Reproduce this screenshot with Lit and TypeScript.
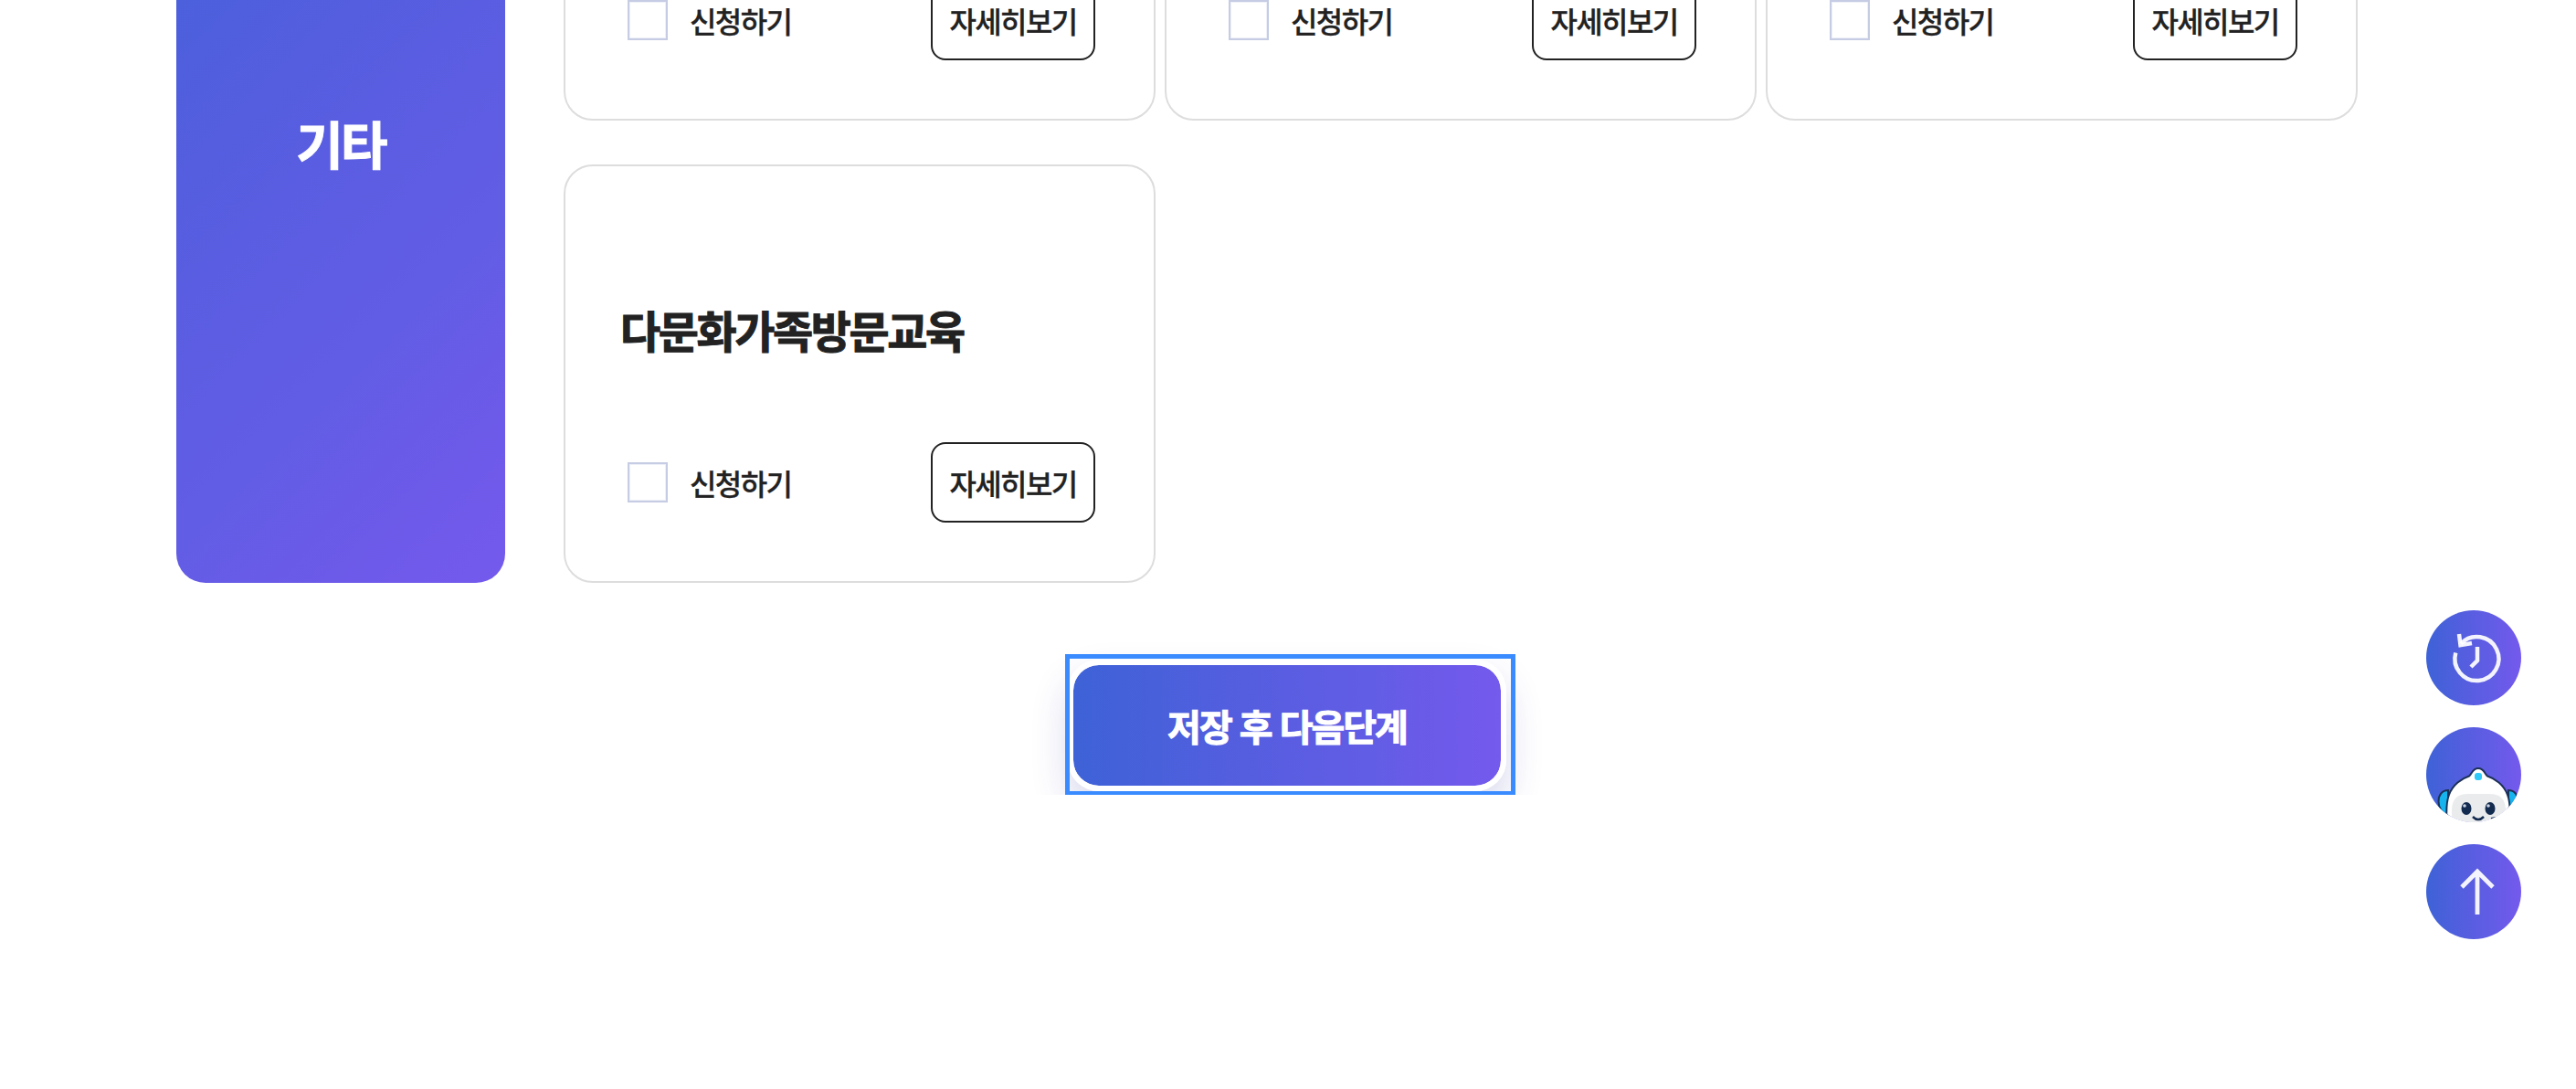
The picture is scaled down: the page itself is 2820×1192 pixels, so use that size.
import { LitElement, html, css, svg } from 'lit';
import { customElement, property } from 'lit/decorators.js';

const fontStack = css`"Noto Sans CJK KR", "Noto Sans", sans-serif`;
const brandStops = css`#3e62d7, #5a5de1 50%, #625de5 70%, #6c5ae9 85%, #745aed`;

@customElement('course-card')
class CourseCard extends LitElement {
  static styles = css`
    :host {
      display: flex;
      flex-direction: column;
      box-sizing: border-box;
      height: 458px;
      padding: 132px 64px 64px 60px;
      border: 2px solid #ddd;
      border-radius: 32px;
      background: #fff;
      color: #222;
    }
    h3 {
      flex: 1;
      margin: 0;
      font-size: 48px;
      font-weight: 700;
      line-height: 92px;
      letter-spacing: -0.05em;
      white-space: nowrap;
      -webkit-text-stroke: 1px currentColor;
    }
    .row {
      display: flex;
      align-items: center;
      justify-content: space-between;
      height: 88px;
    }
    label {
      display: flex;
      align-items: center;
      gap: 24px;
      padding-left: 8px;
      font-size: 32px;
      font-weight: 500;
      line-height: 48px;
      letter-spacing: -0.05em;
    }
    .box {
      box-sizing: border-box;
      width: 44px;
      height: 44px;
      border: 2px solid #c5cce3;
      box-shadow: inset 0 0 0 1px #eef0f8;
    }
    button {
      box-sizing: border-box;
      width: 180px;
      height: 88px;
      padding: 0;
      border: 2px solid #222;
      border-radius: 16px;
      background: #fff;
      color: #222;
      font: inherit;
      font-size: 32px;
      font-weight: 500;
      letter-spacing: -0.05em;
    }
    label,
    button {
      -webkit-text-stroke: 0.3px currentColor;
    }
  `;

  @property() name = '';

  render() {
    return html`
      <h3>${this.name}</h3>
      <div class="row">
        <label><span class="box"></span><span>신청하기</span></label>
        <button>자세히보기</button>
      </div>
    `;
  }
}

const historyIcon = svg`
  <g fill="none" stroke="#fff" stroke-opacity=".93" stroke-width="4.500">
    <path d="M32.300 46.500A24 24 0 1 0 38 36.500" />
    <path d="M36 26L37.500 38.200L50 36" />
    <path d="M56 40V55L49 62" />
  </g>
`;

const robotIcon = svg`
  <g stroke="#1c3157" stroke-width="2">
    <path fill="#16b4ee" d="M24 69C10 69 10 92 24 97Z" />
    <path fill="#16b4ee" d="M90 69C104 69 104 92 90 97Z" />
    <path fill="#fff" d="M23 110C22 98 21 84 25 74C29 63 39 56 47 53.500C50 52 50 45 57 45C64 45 64 52 67 53.500C75 56 85 63 89 74C93 84 92 98 91 110Z" />
  </g>
  <path fill="#e9ebec" d="M29 104C26 84 29 73 46 73H69C86 73 89 84 86 104Z" />
  <rect x="53" y="50" width="8" height="8" rx="3" fill="#2cc9fa" />
  <ellipse cx="44" cy="89" rx="5.500" ry="7" fill="#142b50" />
  <ellipse cx="70" cy="89" rx="5.500" ry="7" fill="#142b50" />
  <circle cx="42" cy="86" r="1.800" fill="#cbd5e4" />
  <circle cx="68" cy="86" r="1.800" fill="#cbd5e4" />
  <path d="M51 98Q57 104 63 98" fill="none" stroke="#142b50" stroke-width="2.500" />
  <path d="M71 100L76 99" stroke="#142b50" stroke-width="2" />
`;

const arrowIcon = svg`
  <path d="M56 77V30M39 47L56 30L73 47" fill="none" stroke="#fff" stroke-opacity=".93" stroke-width="4.800" />
`;

@customElement('quick-menu')
class QuickMenu extends LitElement {
  static styles = css`
    :host {
      display: flex;
      flex-direction: column;
      gap: 24px;
    }
    button {
      width: 104px;
      height: 104px;
      padding: 0;
      border: 0;
      border-radius: 50%;
      overflow: hidden;
      background: linear-gradient(90deg, ${brandStops});
    }
    svg {
      display: block;
    }
  `;

  render() {
    return [historyIcon, robotIcon, arrowIcon].map(
      (icon) => html`<button><svg width="104" height="104" viewBox="0 0 104 104">${icon}</svg></button>`
    );
  }
}

@customElement('app-root')
class AppRoot extends LitElement {
  static styles = css`
    :host {
      display: block;
      position: relative;
      height: 1192px;
      overflow: hidden;
      background: #fff;
      font-family: ${fontStack};
    }
    .section {
      display: flex;
      gap: 64px;
      width: 2388px;
      height: 964px;
      margin: -326px 0 0 193px;
    }
    .category {
      display: flex;
      align-items: center;
      justify-content: center;
      box-sizing: border-box;
      width: 360px;
      padding-bottom: 2px;
      border-radius: 32px;
      background: linear-gradient(135deg, ${brandStops});
      color: #fff;
      font-size: 56px;
      font-weight: 700;
      letter-spacing: -0.05em;
      -webkit-text-stroke: 1px currentColor;
    }
    .cards {
      display: grid;
      grid-template-columns: repeat(3, 648px);
      grid-template-rows: 458px 458px;
      gap: 48px 10px;
    }
    .actions {
      display: flex;
      justify-content: center;
      height: 232px;
      padding-top: 84px;
      box-sizing: border-box;
      overflow: hidden;
    }
    .next {
      position: relative;
      box-sizing: border-box;
      width: 480px;
      height: 144px;
      margin-right: 2px;
      padding: 0;
      border: 6px solid #fff;
      border-radius: 34px;
      background: linear-gradient(90deg, ${brandStops}) padding-box;
      box-shadow: 0 20px 40px rgba(60, 60, 170, 0.2);
      color: #fff;
      font: inherit;
      font-size: 40px;
      font-weight: 700;
      letter-spacing: -0.05em;
      word-spacing: 2px;
      -webkit-text-stroke: 1px currentColor;
    }
    .focus {
      position: absolute;
      top: -12px;
      left: -9px;
      box-sizing: border-box;
      width: 493px;
      height: 155px;
      border: 5px solid #3a8bff;
    }
    quick-menu {
      position: absolute;
      top: 668px;
      right: 60px;
    }
  `;

  render() {
    return html`
      <section class="section">
        <div class="category">기타</div>
        <div class="cards">
          <course-card></course-card>
          <course-card></course-card>
          <course-card></course-card>
          <course-card name="다문화가족방문교육"></course-card>
        </div>
      </section>
      <div class="actions">
        <button class="next">저장 후 다음단계<span class="focus"></span></button>
      </div>
      <quick-menu></quick-menu>
    `;
  }
}
